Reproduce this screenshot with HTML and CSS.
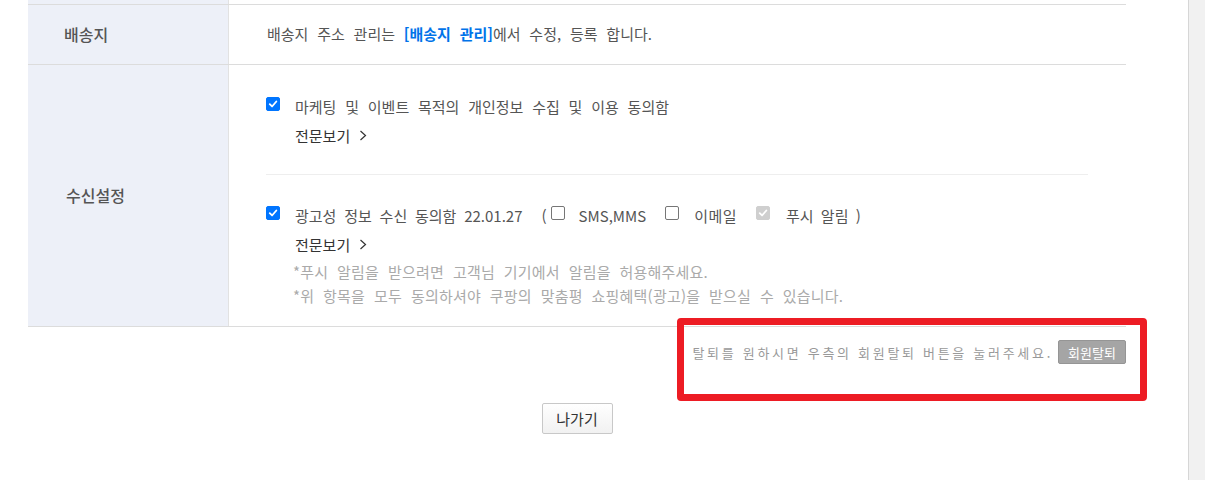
FILE: index.html
```html
<!DOCTYPE html>
<html lang="ko">
<head>
<meta charset="utf-8">
<title>회원정보</title>
<link rel="stylesheet" href="styles.css">
</head>
<body>
<div class="page">
  <main class="main">
    <div class="table">
      <div class="row row-top">
        <div class="th"></div>
        <div class="td"></div>
      </div>
      <div class="row row-addr">
        <div class="th th-addr">배송지</div>
        <div class="td td-addr"><span class="addr-text">배송지 주소 관리는 <a class="link">[배송지 관리]</a>에서 수정, 등록 합니다.</span></div>
      </div>
      <div class="row row-recv">
        <div class="th th-recv">수신설정</div>
        <div class="td td-recv">
          <div class="agree agree-1">
            <div class="line">
              <span class="cb checked"><svg viewBox="0 0 14 14"><path d="M3.2 7.2 L5.9 9.9 L10.9 4.1" fill="none" stroke="#fff" stroke-width="2.1" stroke-linecap="round" stroke-linejoin="round"/></svg></span>
              <span class="label">마케팅 및 이벤트 목적의 개인정보 수집 및 이용 동의함</span>
            </div>
            <a class="more">전문보기<svg class="chev" viewBox="0 0 8 11"><path d="M1.5 1 L6.5 5.5 L1.5 10" fill="none" stroke="#333" stroke-width="1.2"/></svg></a>
          </div>
          <div class="agree agree-2">
            <div class="line">
              <span class="cb checked"><svg viewBox="0 0 14 14"><path d="M3.2 7.2 L5.9 9.9 L10.9 4.1" fill="none" stroke="#fff" stroke-width="2.1" stroke-linecap="round" stroke-linejoin="round"/></svg></span>
              <span class="label label-ad">광고성 정보 수신 동의함 22.01.27</span>
              <span class="paren">(</span>
              <span class="cb sub"></span>
              <span class="opt">SMS,MMS</span>
              <span class="cb sub gap"></span>
              <span class="opt opt-mail">이메일</span>
              <span class="cb sub gap disabled"><svg viewBox="0 0 14 14"><path d="M3.2 7.2 L5.9 9.9 L10.9 4.1" fill="none" stroke="#fff" stroke-width="2.1" stroke-linecap="round" stroke-linejoin="round"/></svg></span>
              <span class="opt opt-push">푸시 알림 )</span>
            </div>
            <a class="more">전문보기<svg class="chev" viewBox="0 0 8 11"><path d="M1.5 1 L6.5 5.5 L1.5 10" fill="none" stroke="#333" stroke-width="1.2"/></svg></a>
            <p class="note first">*푸시 알림을 받으려면 고객님 기기에서 알림을 허용해주세요.</p>
            <p class="note">*위 항목을 모두 동의하셔야 쿠팡의 맞춤평 쇼핑혜택(광고)을 받으실 수 있습니다.</p>
          </div>
        </div>
      </div>
    </div>
    <div class="withdraw">
      <span class="withdraw-text">탈퇴를 원하시면 우측의 회원탈퇴 버튼을 눌러주세요.</span>
      <button class="btn-withdraw" type="button">회원탈퇴</button>
    </div>
    <div class="exit-wrap">
      <button class="btn-exit" type="button">나가기</button>
    </div>
    <div class="highlight"></div>
  </main>
  <div class="scrollbar"></div>
</div>
</body>
</html>
```
FILE: styles.css
```css
* { box-sizing: border-box; }
html, body { margin: 0; padding: 0; background: #fff; }
body {
  font-family: "Noto Sans CJK KR", "Noto Sans", sans-serif;
  font-size: 15px;
  color: #555;
}
.page {
  display: flex;
  width: 1205px;
  height: 480px;
  overflow: hidden;
}
.main {
  position: relative;
  flex: 1;
  padding-left: 28px;
  padding-right: 62px;
}
.scrollbar {
  width: 17px;
  flex: none;
  background: #f1f1f1;
  border-left: 1px solid #d6d6d6;
}
.table { width: 1098px; }
.row {
  display: grid;
  grid-template-columns: 201px 1fr;
  border-bottom: 1px solid #dcdcdc;
}
.th {
  background: #edf0f8;
  border-right: 1px solid #e2e2e2;
  display: flex;
  align-items: center;
  font-weight: 500;
  color: #555;
  font-size: 16px;
}
.row-top { height: 5px; }
.row-addr { height: 60px; }
.row-recv { height: 262px; }
.th-addr { padding-left: 36px; padding-bottom: 1px; }
.th-recv { padding-left: 38px; padding-bottom: 2px; }
.td-addr {
  display: flex;
  align-items: center;
  padding-left: 38px;
  padding-bottom: 3px;
}
.addr-text { word-spacing: 4.6px; }
.link { color: #0073e9; font-weight: 700; text-decoration: none; }
.td-recv { padding: 28px 38px 0 37px; }
.line {
  display: flex;
  align-items: flex-start;
  height: 28px;
  line-height: 28px;
}
.line span { word-spacing: 4.6px; }
.cb {
  flex: none;
  width: 14px;
  height: 14px;
  margin-top: 4px;
  border-radius: 2px;
  border: 1px solid #767676;
  background: #fff;
  display: flex;
  align-items: center;
  justify-content: center;
}
.cb svg { width: 14px; height: 14px; }
.cb.checked { background: #0075ff; border-color: #0075ff; }
.cb.disabled { background: #cfcfcf; border-color: #cfcfcf; }
.label { margin-left: 15px; }
.line span.label-ad { word-spacing: 3.6px; }
.paren { margin-left: 19px; }
.cb.sub { margin-left: 4px; }
.cb.sub.gap { margin-left: 19px; }
.opt { margin-left: 14px; }
.line span.opt-mail { margin-left: 15px; letter-spacing: 0.5px; }
.line span.opt-push { margin-left: 16px; word-spacing: 3px; }
.more {
  display: flex;
  align-items: center;
  height: 28px;
  margin-left: 29px;
  color: #333;
  text-decoration: none;
}
.chev { width: 8px; height: 11px; margin-left: 9px; margin-top: 1px; }
.agree-1 { padding-bottom: 25px; border-bottom: 1px solid #eeeeee; }
.agree-2 { padding-top: 27px; }
.note {
  margin: 0 0 0 27px;
  line-height: 24px;
  color: #aaa;
  letter-spacing: 0.2px;
  word-spacing: 4.5px;
}
.note.first { margin-top: 2px; }
.withdraw {
  width: 1098px;
  display: flex;
  justify-content: flex-end;
  align-items: center;
  margin-top: 13px;
  height: 24px;
}
.withdraw-text {
  font-size: 13px;
  letter-spacing: 2.7px;
  color: #999;
  margin-right: 5px;
}
.btn-withdraw {
  width: 68px;
  height: 24px;
  padding: 0;
  background: #a5a5a5;
  border: 1px solid #959595;
  border-radius: 2px;
  color: #fff;
  font-family: inherit;
  font-size: 13px;
}
.exit-wrap {
  width: 1098px;
  display: flex;
  justify-content: center;
  margin-top: 39px;
}
.btn-exit {
  width: 71px;
  height: 31px;
  padding: 0;
  border: 1px solid #c8c8c8;
  border-radius: 2px;
  background: linear-gradient(#ffffff, #f1f1f1);
  color: #333;
  font-family: inherit;
  font-size: 15px;
  font-weight: 400;
}
.highlight {
  position: absolute;
  left: 677px;
  top: 318px;
  width: 470px;
  height: 83px;
  border: 7px solid #ed1c24;
  border-radius: 4px;
  pointer-events: none;
}
```
